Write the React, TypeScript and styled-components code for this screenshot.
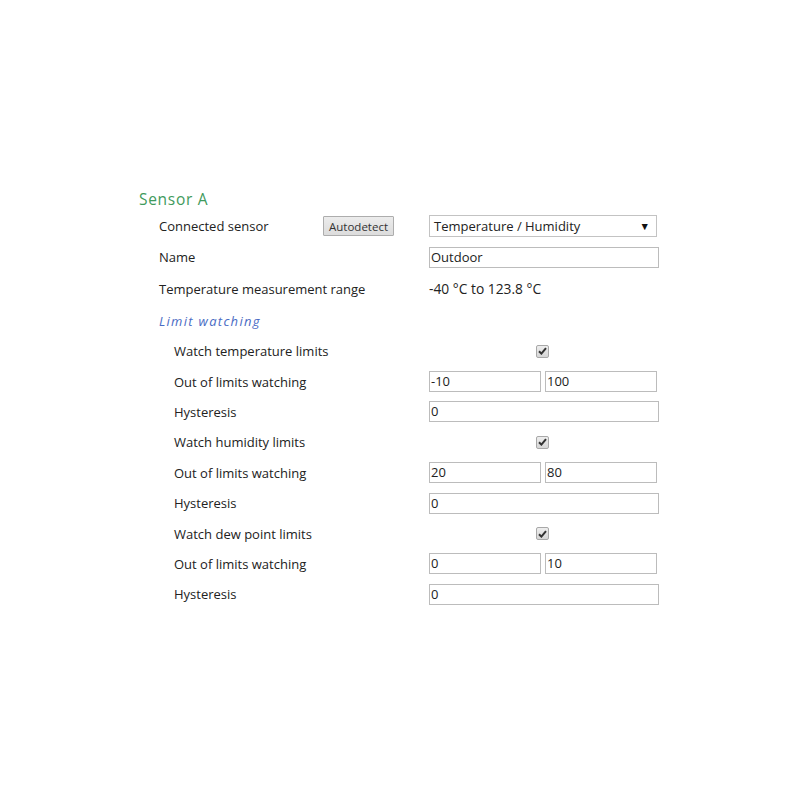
import React from 'react';
import styled, { createGlobalStyle } from 'styled-components';

const GlobalStyle = createGlobalStyle`
  html, body {
    margin: 0;
    padding: 0;
    background: #ffffff;
  }
  body {
    font-family: "Open Sans", "Noto Sans", sans-serif;
    color: #222222;
  }
`;

const Page = styled.div`
  width: 800px;
  height: 800px;
  padding: 187px 0 0 139px;
  box-sizing: border-box;
`;

const Title = styled.h2`
  margin: 0;
  font-size: 15.5px;
  font-weight: 400;
  color: #3f9a5c;
  letter-spacing: 0.7px;
  height: 24px;
  line-height: 24px;
`;

const Section = styled.div`
  padding-left: 20px;
`;

const Row = styled.div<{ $indent?: boolean; $h?: number }>`
  display: grid;
  grid-template-columns: ${({ $indent }) => ($indent ? '255px 230px' : '270px 230px')};
  padding-left: ${({ $indent }) => ($indent ? '15px' : '0')};
  height: ${({ $h }) => $h ?? 30.4}px;
  align-items: center;
`;

const Label = styled.div`
  font-size: 13px;
  display: flex;
  align-items: center;
`;

const Subtitle = styled.div`
  font-size: 13px;
  font-style: italic;
  color: #4a6cc4;
  letter-spacing: 1.3px;
  margin-top: 3px;
  height: 29px;
  line-height: 29px;
`;

const AutoButton = styled.button`
  margin-left: auto;
  margin-right: 35px;
  height: 20px;
  padding: 0 5px;
  font-family: inherit;
  font-size: 11.5px;
  color: #333333;
  background: linear-gradient(#ececec, #dcdcdc);
  border: 1px solid #adadad;
  border-radius: 1px;
`;

const Select = styled.div`
  width: 228px;
  height: 22px;
  box-sizing: border-box;
  border: 1px solid #c3c3c3;
  display: flex;
  align-items: center;
  justify-content: space-between;
  padding: 0 6px 0 4px;
  font-size: 13px;
`;

const Arrow = styled.span`
  font-size: 10.5px;
  color: #111;
`;

const Input = styled.div<{ $w?: number }>`
  width: ${({ $w }) => $w ?? 230}px;
  height: 21px;
  box-sizing: border-box;
  border: 1px solid #bcbcbc;
  padding: 0 1px;
  font-size: 13px;
  line-height: 19px;
  background: #fff;
`;

const Pair = styled.div`
  display: flex;
  gap: 4px;
`;

const Value = styled.div`
  font-size: 13.8px;
`;

const CheckCell = styled.div`
  display: flex;
  justify-content: center;
  padding-right: 4px;
`;

const CheckBox = styled.span`
  width: 11px;
  height: 11px;
  border: 1px solid #a8a8a8;
  border-radius: 2px;
  background: linear-gradient(#eeeeee, #d6d6d6);
  display: flex;
  align-items: center;
  justify-content: center;
`;

const Check = () => (
  <CheckBox>
    <svg width="9" height="8" viewBox="0 0 9 8">
      <path d="M1 4.2 L3.4 6.6 L8 1.2" fill="none" stroke="#333" strokeWidth="2" />
    </svg>
  </CheckBox>
);

type Group = { watch: string; low: string; high: string; hyst: string };

const groups: Group[] = [
  { watch: 'Watch temperature limits', low: '-10', high: '100', hyst: '0' },
  { watch: 'Watch humidity limits', low: '20', high: '80', hyst: '0' },
  { watch: 'Watch dew point limits', low: '0', high: '10', hyst: '0' },
];

export default function App() {
  return (
    <>
      <GlobalStyle />
      <Page>
        <Title>Sensor A</Title>
        <Section>
          <Row $h={30}>
            <Label>
              Connected sensor
              <AutoButton>Autodetect</AutoButton>
            </Label>
            <Select>
              Temperature / Humidity
              <Arrow>▼</Arrow>
            </Select>
          </Row>
          <Row $h={32}>
            <Label>Name</Label>
            <Input>Outdoor</Input>
          </Row>
          <Row $h={31}>
            <Label>Temperature measurement range</Label>
            <Value>-40 °C to 123.8 °C</Value>
          </Row>
          <Subtitle>Limit watching</Subtitle>
          {groups.map((g) => (
            <React.Fragment key={g.watch}>
              <Row $indent>
                <Label>{g.watch}</Label>
                <CheckCell>
                  <Check />
                </CheckCell>
              </Row>
              <Row $indent>
                <Label>Out of limits watching</Label>
                <Pair>
                  <Input $w={112}>{g.low}</Input>
                  <Input $w={112}>{g.high}</Input>
                </Pair>
              </Row>
              <Row $indent>
                <Label>Hysteresis</Label>
                <Input>{g.hyst}</Input>
              </Row>
            </React.Fragment>
          ))}
        </Section>
      </Page>
    </>
  );
}
